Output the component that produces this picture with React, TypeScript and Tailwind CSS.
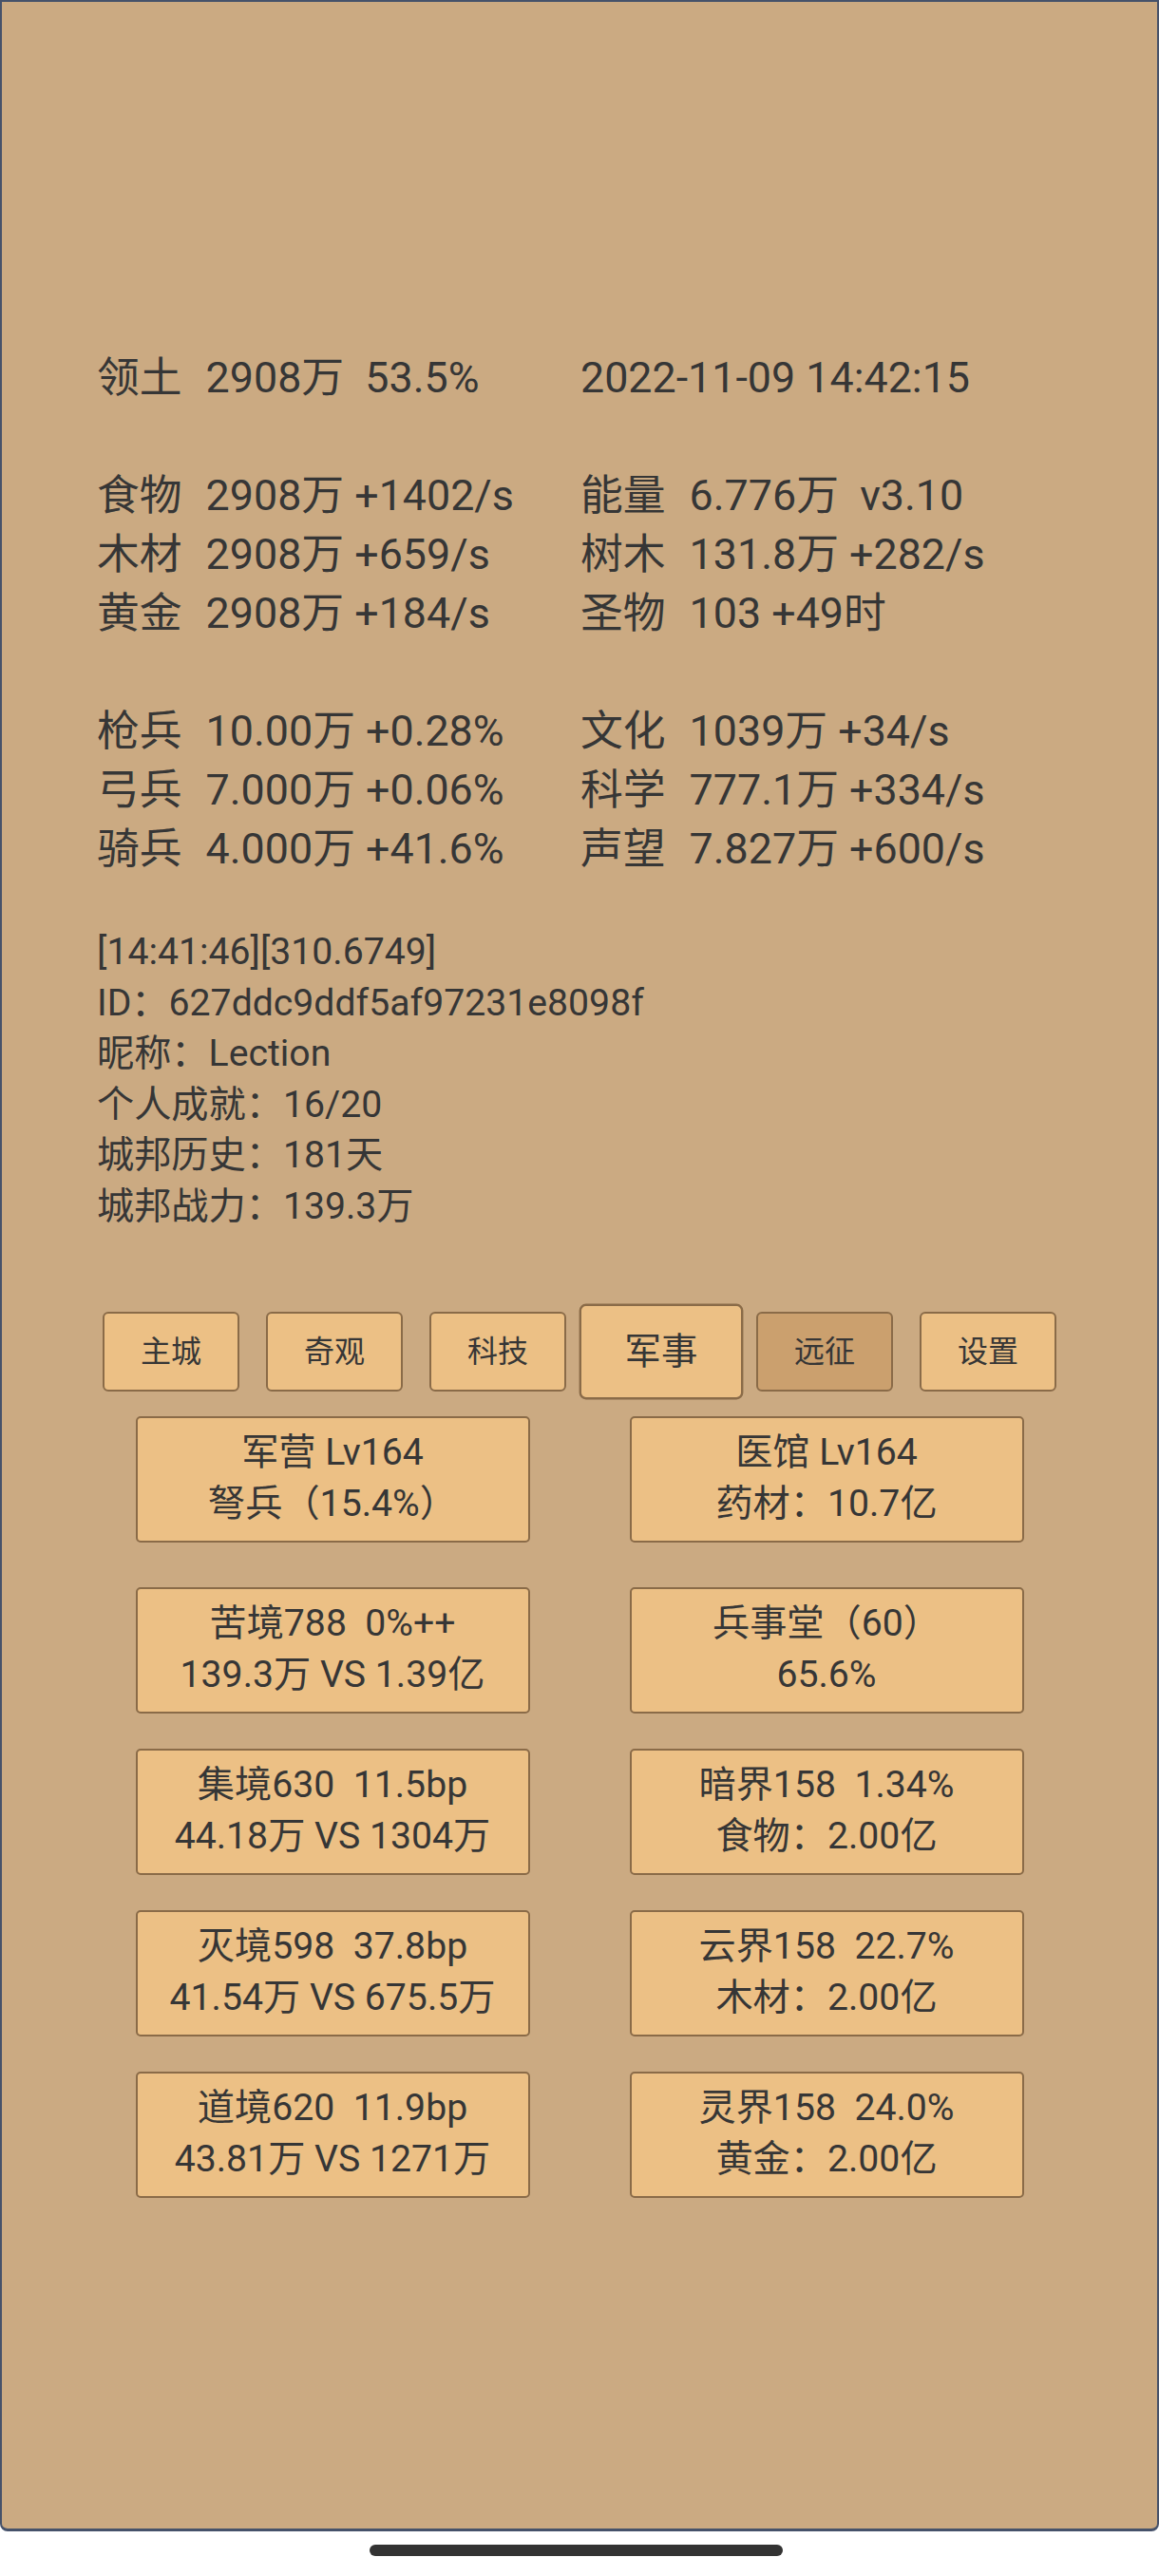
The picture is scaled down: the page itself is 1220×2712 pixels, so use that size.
import React from 'react';

const stats: [string, string, string, string][] = [
  ['领土', '2908万  53.5%', '', '2022-11-09 14:42:15'],
  ['', '', '', ''],
  ['食物', '2908万 +1402/s', '能量', '6.776万  v3.10'],
  ['木材', '2908万 +659/s', '树木', '131.8万 +282/s'],
  ['黄金', '2908万 +184/s', '圣物', '103 +49时'],
  ['', '', '', ''],
  ['枪兵', '10.00万 +0.28%', '文化', '1039万 +34/s'],
  ['弓兵', '7.000万 +0.06%', '科学', '777.1万 +334/s'],
  ['骑兵', '4.000万 +41.6%', '声望', '7.827万 +600/s'],
];

const info = [
  '[14:41:46][310.6749]',
  'ID：627ddc9ddf5af97231e8098f',
  '昵称：Lection',
  '个人成就：16/20',
  '城邦历史：181天',
  '城邦战力：139.3万',
];

const tabs = ['主城', '奇观', '科技', '军事', '远征', '设置'];

const cards: [string, string][][] = [
  [['军营 Lv164', '弩兵（15.4%）'], ['医馆 Lv164', '药材：10.7亿']],
  [['苦境788  0%++', '139.3万 VS 1.39亿'], ['兵事堂（60）', '65.6%']],
  [['集境630  11.5bp', '44.18万 VS 1304万'], ['暗界158  1.34%', '食物：2.00亿']],
  [['灭境598  37.8bp', '41.54万 VS 675.5万'], ['云界158  22.7%', '木材：2.00亿']],
  [['道境620  11.9bp', '43.81万 VS 1271万'], ['灵界158  24.0%', '黄金：2.00亿']],
];

function Cell({ label, value }: { label: string; value: string }) {
  if (!label && !value) return <div className="h-[62px]" />;
  return (
    <div className="flex gap-[25px] h-[62px] items-center whitespace-pre">
      {label && <span>{label}</span>}
      <span>{value}</span>
    </div>
  );
}

export default function App() {
  return (
    <div className="w-[1220px] h-[2712px] bg-white font-['Roboto','Noto_Sans_CJK_SC',sans-serif] text-[#363636]">
      <div className="h-[2665px] bg-[#cbaa82] border-2 border-b-[3px] border-[#46526a] rounded-b-[8px] pt-[365px]">
        {/* resource stats */}
        <div className="pl-[100px] grid grid-cols-[509px_1fr] text-[44.8px] leading-[62px]">
          {stats.map((r, i) => (
            <React.Fragment key={i}>
              <Cell label={r[0]} value={r[1]} />
              <Cell label={r[2]} value={r[3]} />
            </React.Fragment>
          ))}
        </div>

        {/* player info */}
        <div className="pl-[100px] mt-[51px] text-[39.2px] leading-[53.6px]">
          {info.map((l) => (
            <div key={l} className="whitespace-pre">{l}</div>
          ))}
        </div>

        {/* tabs */}
        <div className="mt-[83px] flex justify-center gap-[28px]">
          {tabs.map((t) => {
            const active = t === '军事';
            const pressed = t === '远征';
            return (
              <button
                key={t}
                className={`w-[144px] h-[84px] rounded-[6px] border-2 border-[#8a6b48] text-[32px] flex items-center justify-center ${
                  pressed ? 'bg-[#cba06e]' : 'bg-[#ecc085]'
                } ${active ? 'scale-[1.2]' : ''}`}
              >
                {t}
              </button>
            );
          })}
        </div>

        {/* buildings */}
        <div className="mt-[26px] flex flex-col gap-[37px] items-center">
          {cards.map((row, i) => (
            <div key={i} className={`grid grid-cols-[415px_415px] gap-x-[105px] ${i === 0 ? 'mb-[10px]' : ''}`}>
              {row.map(([a, b]) => (
                <div
                  key={a}
                  className="h-[133px] rounded-[5px] border-2 border-[#8a6b48] bg-[#ecc085] flex flex-col items-center justify-center text-[39.2px] leading-[53.6px] whitespace-pre"
                >
                  <div>{a}</div>
                  <div>{b}</div>
                </div>
              ))}
            </div>
          ))}
        </div>
      </div>
      <div className="ml-[389px] mt-[14px] w-[435px] h-[12px] rounded-full bg-[#333]" />
    </div>
  );
}
